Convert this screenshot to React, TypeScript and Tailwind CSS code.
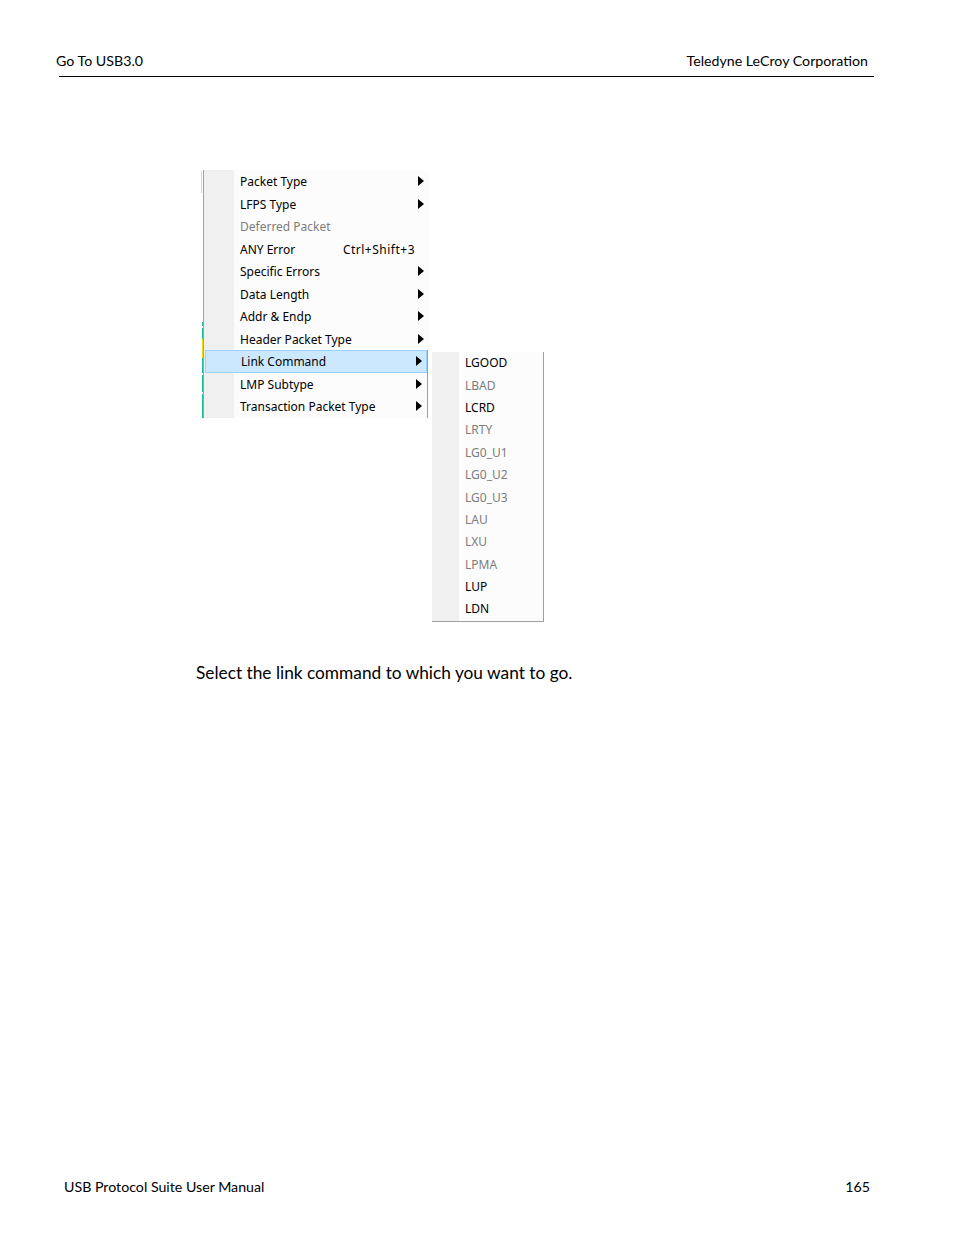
import React from "react";

const mainItems: { label: string; arrow?: boolean; disabled?: boolean; shortcut?: string; active?: boolean }[] = [
  { label: "Packet Type", arrow: true },
  { label: "LFPS Type", arrow: true },
  { label: "Deferred Packet", disabled: true },
  { label: "ANY Error", shortcut: "Ctrl+Shift+3" },
  { label: "Specific Errors", arrow: true },
  { label: "Data Length", arrow: true },
  { label: "Addr & Endp", arrow: true },
  { label: "Header Packet Type", arrow: true },
];

const lowerItems: { label: string; active?: boolean }[] = [
  { label: "Link Command", active: true },
  { label: "LMP Subtype" },
  { label: "Transaction Packet Type" },
];

const subItems: { label: string; enabled: boolean }[] = [
  { label: "LGOOD", enabled: true },
  { label: "LBAD", enabled: false },
  { label: "LCRD", enabled: true },
  { label: "LRTY", enabled: false },
  { label: "LG0_U1", enabled: false },
  { label: "LG0_U2", enabled: false },
  { label: "LG0_U3", enabled: false },
  { label: "LAU", enabled: false },
  { label: "LXU", enabled: false },
  { label: "LPMA", enabled: false },
  { label: "LUP", enabled: true },
  { label: "LDN", enabled: true },
];

function Arrow() {
  return (
    <svg width="6" height="10" viewBox="0 0 6 10" className="shrink-0">
      <path d="M0 0 L6 5 L0 10 Z" fill="#000" />
    </svg>
  );
}

function Row({
  label,
  arrow,
  disabled,
  shortcut,
  active,
}: {
  label: string;
  arrow?: boolean;
  disabled?: boolean;
  shortcut?: string;
  active?: boolean;
}) {
  return (
    <div className="flex h-[22.5px]">
      <div className="w-[30px] shrink-0 bg-[#f0f0f0]" />
      <div
        className={
          active
            ? "flex flex-1 items-center bg-[#cce8ff] border border-[#99d1ff] ml-[-29px] pl-[35px] pr-[4px]"
            : "flex flex-1 items-center pl-[6px] pr-[5px]"
        }
      >
        <span className={(disabled ? "text-[#7d7d7d]" : "text-black") + " pt-[2px]"}>{label}</span>
        <div className="flex-1" />
        {shortcut ? <span className="mr-[9px] pt-[2px] text-black tracking-[0.5px]">{shortcut}</span> : null}
        {arrow ? <Arrow /> : null}
      </div>
    </div>
  );
}

export default function App() {
  return (
    <div className="w-[954px] h-[1235px] bg-white flex flex-col text-black">
      {/* header */}
      <div className="ml-[59px] w-[815px] mt-[52px] border-b border-black pb-[6px] flex justify-between font-['Lato','Open_Sans',sans-serif] text-[14.2px] leading-[18px]">
        <span className="ml-[-3px]">Go To USB3.0</span>
        <span className="mr-[6px]">Teledyne LeCroy Corporation</span>
      </div>

      {/* menu screenshot */}
      <div className="mt-[93px] ml-[201px] flex items-start font-['Noto_Sans','Open_Sans',sans-serif] text-[12px] leading-[16px]">
        {/* left strip */}
        <div className="flex">
          <div className="w-[1px] flex flex-col h-[248px] pt-[1px]">
            <div className="h-[22px] bg-[#c4dcf2]" />
          </div>
          <div className="w-[1px] flex flex-col h-[248px]">
            <div className="h-[152px]" />
            <div className="h-[4px] bg-[#1abc9c]" />
            <div className="h-[2px]" />
            <div className="h-[11px] bg-[#1abc9c]" />
            <div className="h-[19px] bg-[#f5e000]" />
            <div className="h-[2px] bg-[#1abc9c]" />
            <div className="h-[13px] bg-[#1abc9c]" />
            <div className="h-[2px]" />
            <div className="h-[17px] bg-[#1abc9c]" />
            <div className="h-[2px]" />
            <div className="flex-1 bg-[#1abc9c]" />
          </div>
          <div className="w-[1px] h-[248px] bg-[#a0a0a0]" />
        </div>

        {/* main menu */}
        <div className="w-[225px] bg-[#fcfcfc] flex flex-col">
          {mainItems.map((it) => (
            <Row key={it.label} {...it} />
          ))}
          <div className="flex flex-col border-r border-[#a0a0a0] mr-[1px]">
            {lowerItems.map((it) => (
              <Row key={it.label} label={it.label} arrow active={it.active} />
            ))}
          </div>
        </div>

        {/* submenu */}
        <div className="ml-[3px] mt-[182px] w-[112px] flex flex-col bg-[#fcfcfc] border-r border-b border-[#a0a0a0]">
          {subItems.map((it) => (
            <div key={it.label} className="flex h-[22.4px]">
              <div className="w-[27px] shrink-0 bg-[#f0f0f0]" />
              <div className="flex items-center pl-[6px]">
                <span className={it.enabled ? "text-black" : "text-[#7d7d7d]"}>{it.label}</span>
              </div>
            </div>
          ))}
        </div>
      </div>

      {/* body text */}
      <p className="ml-[196px] mt-[41px] font-['Lato','Open_Sans',sans-serif] text-[17.3px] leading-[20px]">
        Select the link command to which you want to go.
      </p>

      <div className="flex-1" />

      {/* footer */}
      <div className="ml-[64px] w-[806px] mb-[39px] flex justify-between font-['Lato','Open_Sans',sans-serif] text-[14.2px] leading-[18px]">
        <span>USB Protocol Suite User Manual</span>
        <span>165</span>
      </div>
    </div>
  );
}
